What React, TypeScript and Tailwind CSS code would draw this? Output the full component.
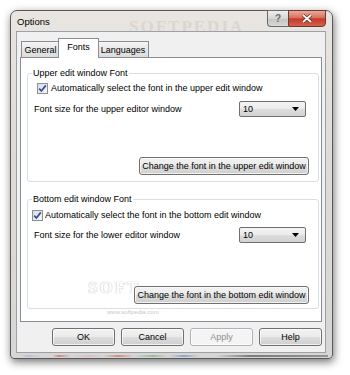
import React from "react";

const font = { fontFamily: '"Liberation Sans", Arial, sans-serif' };

function Checkbox({ className = "" }: { className?: string }) {
  return (
    <div
      className={`w-[11px] h-[11px] border border-[#8e8f8f] bg-[linear-gradient(135deg,#d8dce4,#f8f8f8)] flex items-center justify-center shrink-0 ${className}`}
    >
      <svg width="9" height="9" viewBox="0 0 9 9">
        <path d="M1.2 4.6 L3.4 7 L7.8 1.4" fill="none" stroke="#2f4e9a" strokeWidth="1.7" />
      </svg>
    </div>
  );
}

function Combo() {
  return (
    <div className="w-[67px] h-[16px] border border-[#707070] rounded-[2px] bg-[linear-gradient(to_bottom,#f4f4f4_0%,#ebebeb_50%,#dddddd_51%,#d2d2d2_100%)] flex items-center justify-between pl-[3px] pr-[6px] text-[9px] leading-none">
      <span>10</span>
      <svg width="7" height="4" viewBox="0 0 7 4">
        <path d="M0 0 H7 L3.5 4 Z" fill="#000" />
      </svg>
    </div>
  );
}

function Btn({ children, w, disabled = false }: { children: React.ReactNode; w: string; disabled?: boolean }) {
  return (
    <div
      className={`${w} h-[18px] rounded-[3px] border flex items-center justify-center text-[9px] leading-none relative z-10 shadow-[inset_0_0_0_1px_rgba(255,255,255,0.7)] ${
        disabled
          ? "border-[#adb2b5] bg-[#f4f4f4] text-[#8d8d8d]"
          : "border-[#707070] bg-[linear-gradient(to_bottom,#f2f2f2_0%,#ebebeb_50%,#dddddd_51%,#cfcfcf_100%)] text-black"
      }`}
    >
      {children}
    </div>
  );
}

export default function App() {
  return (
    <div className="w-[350px] h-[375px] bg-white pl-[10px] pt-[10px] relative overflow-hidden" style={font}>
      <div className="w-[323px] h-[349px] border border-[#595959] rounded-t-[7px] rounded-b-[4px] bg-[linear-gradient(to_bottom,#e9e5e0,#dedbd8_40%,#d8d6d4)] shadow-[1px_3px_9px_rgba(0,0,0,0.55)] flex flex-col relative">
        {/* title watermark */}
        <div className="absolute left-[118px] top-[3px] text-[17px] font-bold tracking-[2px] text-[#bdb6ae] opacity-30 pointer-events-none" style={{ fontFamily: '"Liberation Serif", serif' }}>
          SOFTPEDIA
        </div>
        {/* Title bar */}
        <div className="h-[20px] flex justify-between relative">
          <div className="pl-[6px] pt-[5px] text-[9.5px] leading-[12px] text-black">Options</div>
          <div className="flex mr-[6px] -mt-px">
            <div className="w-[21px] h-[17px] border border-[#6a6a6a] border-r-0 rounded-bl-[4px] bg-[linear-gradient(to_bottom,#eeeeee,#d6d6d6_50%,#c4c4c4_51%,#d8d8d8)] flex items-center justify-center text-[10px] font-bold text-[#6b6b6b] leading-none">
              ?
            </div>
            <div className="w-[38px] h-[17px] border border-[#6a3a34] rounded-br-[4px] bg-[linear-gradient(to_bottom,#eaa99c,#d8705f_45%,#c23b2a_52%,#d5604c)] flex items-center justify-center">
              <svg width="12" height="9" viewBox="0 0 12 9">
                <path d="M2 1 L10 8 M10 1 L2 8" stroke="#5a2a24" strokeWidth="3.2" />
                <path d="M2 1 L10 8 M10 1 L2 8" stroke="#ffffff" strokeWidth="1.8" />
              </svg>
            </div>
          </div>
        </div>

        {/* Client area */}
        <div className="ml-[5px] w-[310px] h-[322px] border border-[#9ba1a8] bg-[#f0f0f0] flex flex-col relative">
          <div className="pt-[6px] pl-[3px] pr-[3px] flex flex-col">
            {/* Tab strip */}
            <div className="h-[20px] -mb-px relative z-10 flex items-end pl-[1px]">
              <div className="w-[39px] h-[17px] border border-[#898c95] bg-[linear-gradient(to_bottom,#f5f5f5,#e6e6e6_50%,#dcdcdc)] flex items-center justify-center text-[9px] leading-none pt-[1px]">
                General
              </div>
              <div className="-ml-[2px] w-[41px] h-[20px] border border-b-0 border-[#898c95] bg-white relative z-10 flex items-start justify-center pt-[4px] text-[9px] leading-none">
                Fonts
              </div>
              <div className="-ml-[2px] w-[52px] h-[17px] border border-[#898c95] bg-[linear-gradient(to_bottom,#f5f5f5,#e6e6e6_50%,#dcdcdc)] flex items-center justify-center text-[9px] leading-none pt-[1px]">
                Languages
              </div>
            </div>
            {/* Panel */}
            <div className="h-[265px] border border-[#898c95] bg-white pt-[9px] pl-[6px] pr-[2px] flex flex-col text-[9px] text-black relative">
              {/* watermark behind content */}
              <div className="absolute left-[67px] top-[220px] text-[17px] leading-[20px] font-bold tracking-[2px] text-white whitespace-nowrap [text-shadow:0_0_1px_#999] pointer-events-none" style={{ fontFamily: '"Liberation Serif", serif' }}>
                SOFT
              </div>
              <div className="absolute left-[86px] top-[250px] text-[6px] leading-[8px] text-[#c8c8c8] pointer-events-none">www.softpedia.com</div>

              <fieldset className="border border-[#d5dfe5] rounded-[3px] pb-[6px] relative">
                <legend className="ml-[4px] px-[1px] text-[9px] leading-[12px]">Upper edit window Font</legend>
                <div className="mt-[4px] ml-[9px] flex items-center h-[11px]">
                  <Checkbox />
                  <span className="ml-[3px] leading-none">Automatically select the font in the upper edit window</span>
                </div>
                <div className="mt-[7px] ml-[6px] mr-[12px] flex items-center justify-between h-[16px]">
                  <span className="leading-none">Font size for the upper editor window</span>
                  <Combo />
                </div>
                <div className="mt-[40px] mr-[9px] flex justify-end">
                  <Btn w="w-[170px]">Change the font in the upper edit window</Btn>
                </div>
              </fieldset>
              <fieldset className="mt-[11px] border border-[#d5dfe5] rounded-[3px] pb-[4px] relative">
                <legend className="ml-[4px] px-[1px] text-[9px] leading-[12px]">Bottom edit window Font</legend>
                <div className="mt-[5px] ml-[4px] flex items-center h-[11px]">
                  <Checkbox />
                  <span className="ml-[2px] leading-none">Automatically select the font in the bottom edit window</span>
                </div>
                <div className="mt-[6px] ml-[6px] mr-[12px] flex items-center justify-between h-[16px]">
                  <span className="leading-none">Font size for the lower editor window</span>
                  <Combo />
                </div>
                <div className="mt-[43px] mr-[9px] flex justify-end">
                  <Btn w="w-[175px]">Change the font in the bottom edit window</Btn>
                </div>
              </fieldset>
            </div>
          </div>
          {/* Bottom buttons */}
          <div className="mt-[6px] pr-[3px] flex justify-end gap-[6px]">
            <Btn w="w-[63px]">OK</Btn>
            <Btn w="w-[63px]">Cancel</Btn>
            <Btn w="w-[63px]" disabled>
              Apply
            </Btn>
            <Btn w="w-[63px]">Help</Btn>
          </div>
        </div>

        {/* bottom frame desktop reflections */}
        <div className="mt-auto mb-px mx-[4px] h-[2px] bg-[linear-gradient(to_right,transparent_2%,#b9b0d8_4%,transparent_9%,transparent_12%,#d06060_14%,transparent_18%,#e0b0c0_24%,transparent_28%,#d07050_33%,transparent_38%,#80b080_44%,transparent_49%,#7090c8_54%,transparent_59%,transparent_64%,#555_75%,#777_100%)] opacity-70" />
      </div>
    </div>
  );
}
